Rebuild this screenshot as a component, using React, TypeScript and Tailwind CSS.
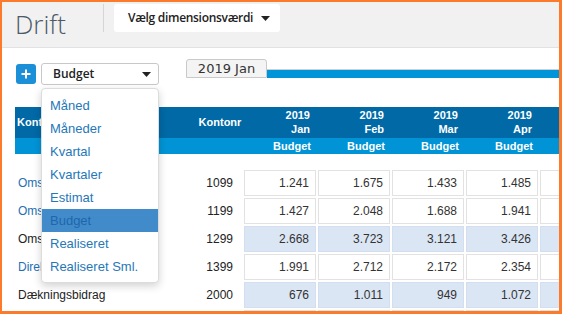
import React from "react";

const months = ["Jan", "Feb", "Mar", "Apr", "May"];

const rows = [
  { label: "Omsætning varer", nr: "1099", link: true, total: false, vals: ["1.241", "1.675", "1.433", "1.485", "1.512"] },
  { label: "Omsætning ydelser", nr: "1199", link: true, total: false, vals: ["1.427", "2.048", "1.688", "1.941", "1.803"] },
  { label: "Omsætning i alt", nr: "1299", link: false, total: true, vals: ["2.668", "3.723", "3.121", "3.426", "3.315"] },
  { label: "Direkte omkostninger", nr: "1399", link: true, total: false, vals: ["1.991", "2.712", "2.172", "2.354", "2.290"] },
  { label: "Dækningsbidrag", nr: "2000", link: false, total: true, vals: ["676", "1.011", "949", "1.072", "1.025"] },
  { label: "Personale", nr: "2099", link: true, total: false, vals: ["", "", "", "", ""] },
];

const menu = ["Måned", "Måneder", "Kvartal", "Kvartaler", "Estimat", "Budget", "Realiseret", "Realiseret Sml."];

function Caret() {
  return (
    <svg width="9" height="5" viewBox="0 0 9 5" className="shrink-0">
      <path d="M0 0h9L4.5 5z" fill="#222" />
    </svg>
  );
}

export default function App() {
  return (
    <div className="relative w-[562px] h-[314px] overflow-hidden bg-white border-t-2 border-l-2 border-r-[3px] border-b-[3px] border-[#fb7a2c] font-['Liberation_Sans',Arial,sans-serif]">
      {/* top bar */}
      <div className="h-[46px] bg-[#f1f1f1] border-b border-[#e2e2e2] flex items-center">
        <div className="ml-[13px] w-[88px] shrink-0 text-[26px] font-light leading-none text-[#4b5968] font-['Open_Sans',sans-serif] -mt-[2px]">
          Drift
        </div>
        <div className="w-px h-[28px] shrink-0 bg-[#d6d6d6] -mt-[13px]" />
        <button className="ml-[10px] -mt-[13px] w-[166px] h-[28px] shrink-0 whitespace-nowrap bg-white rounded-[3px] flex items-center pl-[14px] pr-[12px] gap-[8px] font-['Open_Sans',sans-serif] text-[12px] font-semibold text-[#222]">
          <span className="tracking-[-0.3px]">Vælg dimensionsværdi</span>
          <Caret />
        </button>
      </div>

      {/* controls */}
      <div className="flex items-start mt-[11px]">
        <div className="ml-[14px] mt-[5px] w-[20px] h-[20px] shrink-0 rounded-[3px] bg-[#1b8fd8] flex items-center justify-center">
          <svg width="10" height="10" viewBox="0 0 10 10">
            <path d="M5 0.5v9M0.5 5h9" stroke="#fff" strokeWidth="2" />
          </svg>
        </div>
        <div className="ml-[5px] mt-[4px] w-[118px] h-[22px] shrink-0 border border-[#c8c8c8] rounded-[3px] flex items-center justify-between pl-[11px] pr-[7px] font-['Open_Sans',sans-serif] text-[12px] font-semibold text-[#222]">
          <span>Budget</span>
          <Caret />
        </div>
        <div className="ml-[27px] w-[81px] h-[19px] shrink-0 bg-[#f4f4f4] border border-[#c9c9c9] rounded-t-[3px] text-center text-[13px] leading-[17px] text-[#333] font-['DejaVu_Sans',sans-serif]">
          2019 Jan
        </div>
        <div className="flex-1 mt-[10px] h-[9px] border-t border-[#cfcfcf] bg-[#0095d8]" />
      </div>

      {/* table */}
      <div className="ml-[13px] mt-[22px] text-[11px]">
        <div className="flex h-[31px] bg-[#0069a6] text-white font-bold">
          <div className="w-[181px] shrink-0 pl-[2px] flex items-center">Kontonavn</div>
          <div className="w-[48px] shrink-0 flex items-center justify-center">Kontonr</div>
          {months.map((m) => (
            <div key={m} className="w-[72px] mr-[2px] shrink-0 flex flex-col justify-center items-end pr-[6px] leading-[13.5px]">
              <span>2019</span>
              <span>{m}</span>
            </div>
          ))}
        </div>
        <div className="flex h-[16px] bg-[#0094d6] text-white font-bold">
          <div className="w-[229px] shrink-0" />
          {months.map((m) => (
            <div key={m} className="w-[72px] mr-[2px] shrink-0 text-right pr-[5px] leading-[16px]">
              Budget
            </div>
          ))}
        </div>

        <div className="mt-[16px] flex flex-col gap-[2px] text-[12px]">
          {rows.map((r) => (
            <div key={r.nr} className="flex h-[26px] shrink-0 items-center">
              <div className={`w-[181px] shrink-0 pl-[3px] whitespace-nowrap ${r.link ? "text-[#1f6fb4]" : "text-[#222]"}`}>{r.label}</div>
              <div className="w-[48px] shrink-0 text-right pr-[11px] text-[#222]">{r.nr}</div>
              {r.vals.map((v, i) => (
                <div
                  key={i}
                  className={`w-[72px] h-[26px] mr-[2px] shrink-0 border flex items-center justify-end pr-[6px] text-[#333] ${
                    r.total ? "bg-[#dbe6f5] border-[#d3dff0]" : "bg-white border-[#e2e2e2]"
                  }`}
                >
                  {v}
                </div>
              ))}
            </div>
          ))}
        </div>
      </div>

      {/* dropdown menu */}
      <div className="absolute left-[39px] top-[86px] w-[118px] h-[195px] bg-white border border-[#dcdcdc] rounded-[4px] shadow-[0_3px_8px_rgba(0,0,0,0.18)] py-[5px]">
        {menu.map((m) => (
          <div
            key={m}
            className={`h-[23px] pl-[8px] flex items-center whitespace-nowrap text-[13px] ${
              m === "Budget" ? "bg-[#428bca] text-[#1e66ad]" : "text-[#2677b8]"
            }`}
          >
            {m}
          </div>
        ))}
      </div>
    </div>
  );
}
